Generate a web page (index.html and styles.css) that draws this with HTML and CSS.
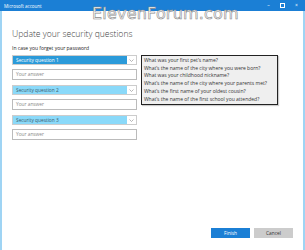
FILE: index.html
```html
<!DOCTYPE html>
<html lang="en">
<head>
    <meta charset="UTF-8">
    <title>Microsoft account</title>
    <link rel="stylesheet" href="styles.css">
</head>
<body>
    <div class="window">
        <div class="titlebar">
            <span class="title">Microsoft account</span>
            <div class="controls">
                <span class="ctl">&#8211;</span>
                <span class="ctl box"></span>
                <span class="ctl">&#215;</span>
            </div>
        </div>
        <div class="watermark">ElevenForum.com</div>
        <div class="content">
            <h1>Update your security questions</h1>
            <p class="hint">In case you forget your password</p>
            <div class="form-area">
                <div class="fields">
                    <div class="select selected">
                        <span class="select-label">Security question 1</span>
                        <span class="arrow"><svg width="5" height="3" viewBox="0 0 5 3"><path d="M0.5 0.5 L2.5 2.5 L4.5 0.5" fill="none" stroke="#999" stroke-width="0.7"/></svg></span>
                    </div>
                    <div class="answer">Your answer</div>
                    <div class="select">
                        <span class="select-label">Security question 2</span>
                        <span class="arrow"><svg width="5" height="3" viewBox="0 0 5 3"><path d="M0.5 0.5 L2.5 2.5 L4.5 0.5" fill="none" stroke="#999" stroke-width="0.7"/></svg></span>
                    </div>
                    <div class="answer">Your answer</div>
                    <div class="select">
                        <span class="select-label">Security question 3</span>
                        <span class="arrow"><svg width="5" height="3" viewBox="0 0 5 3"><path d="M0.5 0.5 L2.5 2.5 L4.5 0.5" fill="none" stroke="#999" stroke-width="0.7"/></svg></span>
                    </div>
                    <div class="answer">Your answer</div>
                </div>
                <ul class="dropdown">
                    <li>What was your first pet’s name?</li>
                    <li>What’s the name of the city where you were born?</li>
                    <li>What was your childhood nickname?</li>
                    <li>What’s the name of the city where your parents met?</li>
                    <li>What’s the first name of your oldest cousin?</li>
                    <li>What’s the name of the first school you attended?</li>
                </ul>
            </div>
        </div>
        <div class="buttons">
            <button class="btn primary">Finish</button>
            <button class="btn">Cancel</button>
        </div>
    </div>
</body>
</html>
```

FILE: styles.css
```css
/* Microsoft account dialog */
body {
    margin: 0;
    font-family: "Open Sans", "Noto Sans", sans-serif;
    background: #fff;
}
.window {
    position: relative;
    height: 250px;
    box-sizing: border-box;
    border-left: 2px solid #9fd4f4;
    border-right: 2px solid #9fd4f4;
    background: #fff;
    display: flex;
    flex-direction: column;
}
.titlebar {
    height: 11px;
    background: #1b7fd5;
    color: #fff;
    display: flex;
    align-items: center;
    justify-content: space-between;
    margin: 0 -2px;
    padding: 0 4px;
}
.title {
    font-size: 4.5px;
}
.controls {
    display: flex;
    gap: 9px;
    align-items: center;
    padding-right: 2px;
}
.ctl {
    font-size: 5px;
    width: 5px;
    text-align: center;
    line-height: 5px;
}
.ctl.box {
    width: 3px;
    height: 3px;
    border: 0.7px solid #fff;
}
.watermark {
    position: absolute;
    top: 4px;
    left: 90px;
    font-family: "DejaVu Sans", sans-serif;
    font-size: 16px;
    color: #fff;
    -webkit-text-stroke: 0.6px #8a8a8a;
    letter-spacing: 0.2px;
}
.content {
    padding: 17px 0 0 10px;
}
h1 {
    margin: 0;
    font-size: 8.6px;
    font-weight: 300;
    color: #444;
    line-height: 12px;
}
.hint {
    margin: 5px 0 0;
    font-size: 5px;
    color: #222;
    line-height: 7px;
}
.form-area {
    display: flex;
    align-items: flex-start;
    margin-top: 3px;
}
.fields {
    width: 125px;
    display: flex;
    flex-direction: column;
    gap: 4px;
}
.select {
    height: 10px;
    box-sizing: border-box;
    display: flex;
    border: 1px solid #ccc;
    background: #fff;
}
.select-label {
    flex: 1;
    background: #8ad9f9;
    color: #3a5a6a;
    font-size: 4.8px;
    line-height: 8px;
    padding-left: 3px;
}
.select.selected .select-label {
    background: #2b9ad9;
    color: #fff;
}
.arrow {
    width: 9px;
    display: flex;
    align-items: center;
    justify-content: center;
}
.answer {
    height: 11px;
    box-sizing: border-box;
    border: 1px solid #bbb;
    font-size: 4.8px;
    line-height: 9px;
    color: #888;
    padding-left: 3px;
    margin-bottom: 1px;
}
.dropdown {
    list-style: none;
    margin: 0 0 0 4px;
    padding: 1px 2px;
    width: 137px;
    box-sizing: border-box;
    border: 1.5px solid #222;
    background: #efefef;
    box-shadow: 1px 1px 1px rgba(0,0,0,0.2);
}
.dropdown li {
    font-size: 5px;
    line-height: 7.7px;
    color: #333;
    white-space: nowrap;
}
.buttons {
    margin-top: auto;
    display: flex;
    justify-content: flex-end;
    gap: 4px;
    padding: 0 10px 12px 0;
}
.btn {
    width: 39px;
    height: 10px;
    border: none;
    padding: 0;
    background: #ccc;
    color: #333;
    font-family: inherit;
    font-size: 4.8px;
}
.btn.primary {
    background: #1b7fd5;
    color: #fff;
}
```
